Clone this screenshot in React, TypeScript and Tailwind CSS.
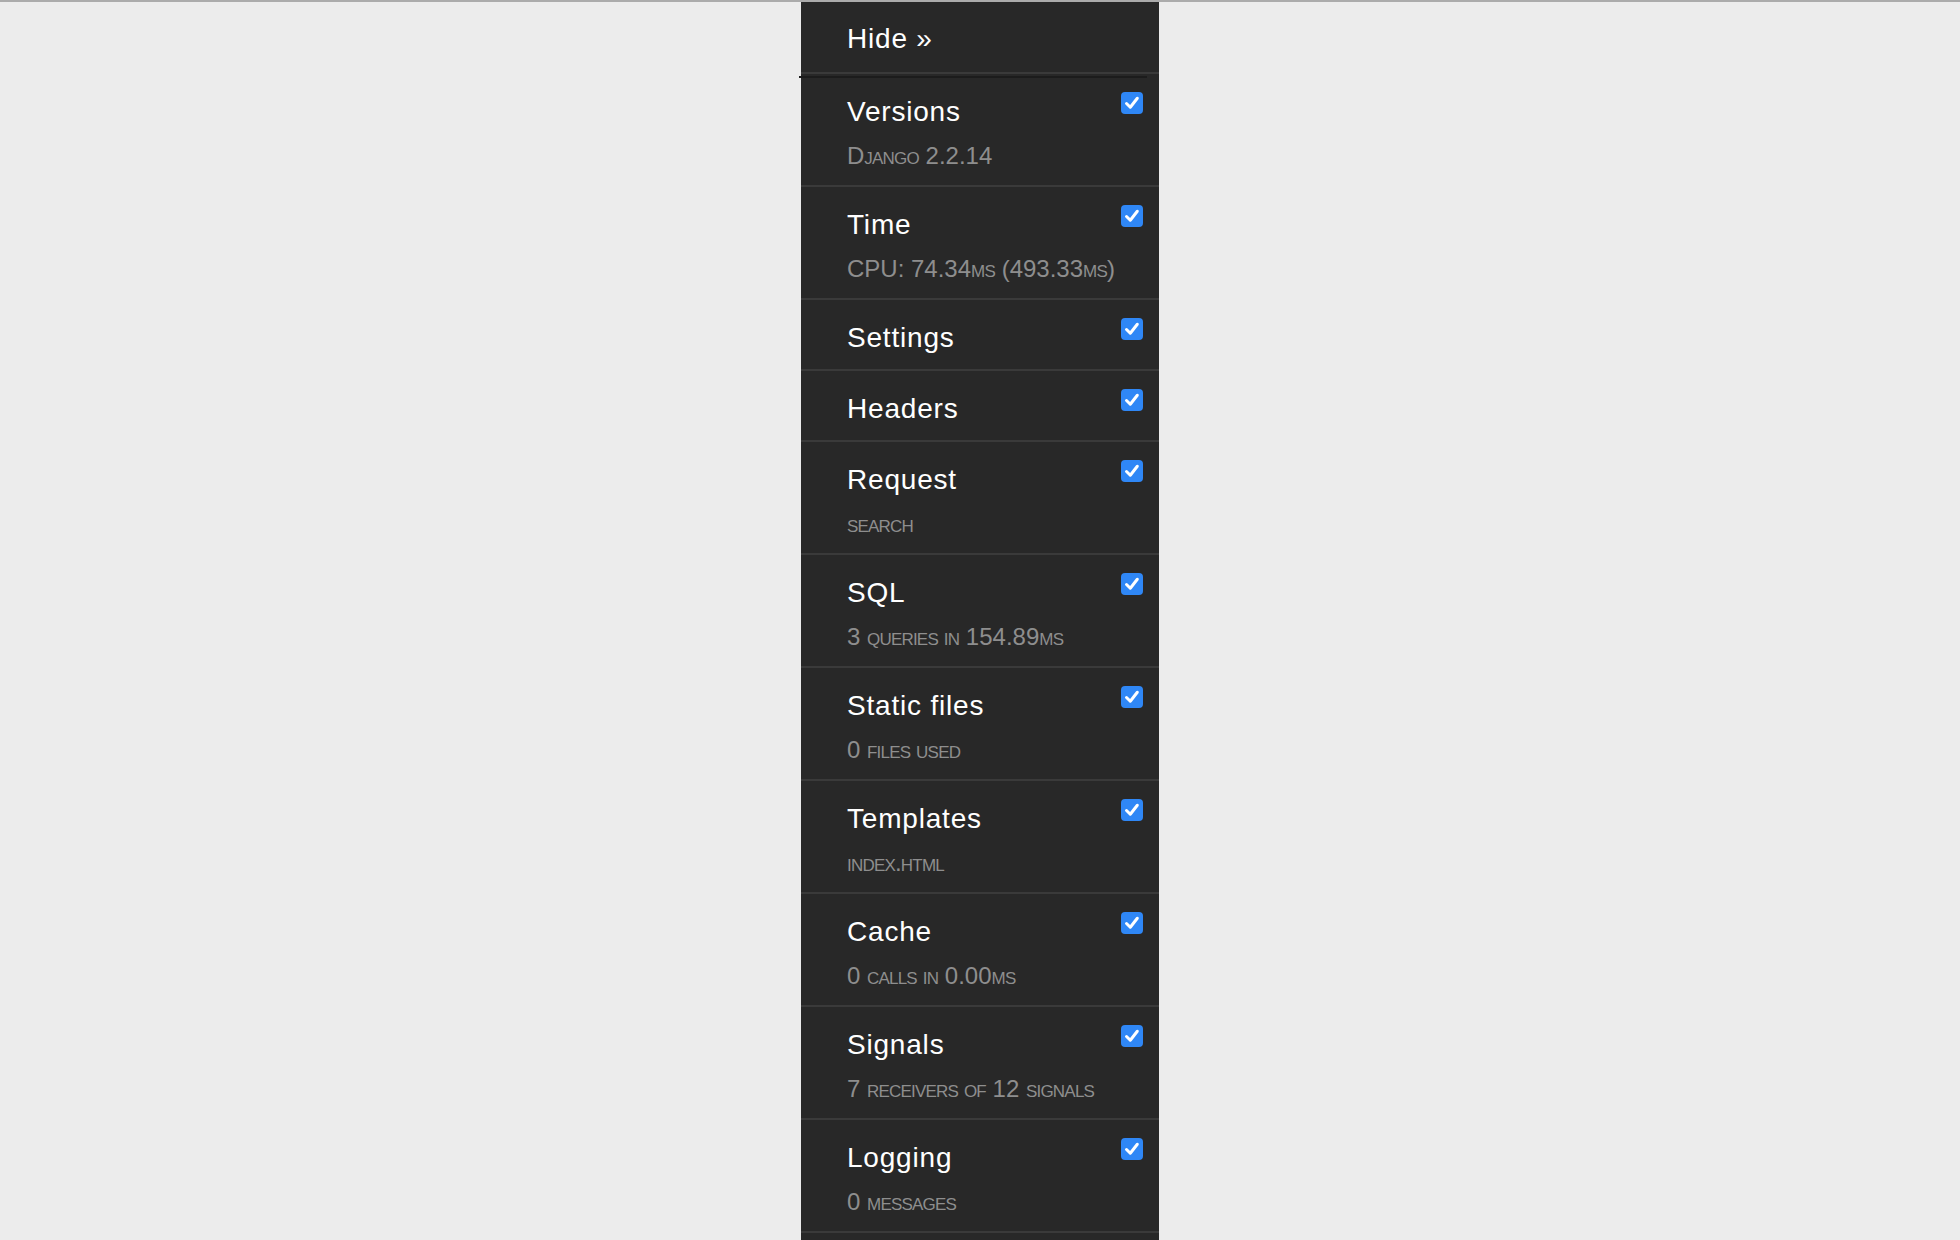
import type { ReactNode } from "react";

type Panel = {
  title: string;
  sub?: ReactNode;
};

const sc = "[font-variant:small-caps] tracking-[-0.8px]";

const PANELS: Panel[] = [
  {
    title: "Versions",
    sub: (
      <>
        D<span className={sc}>jango</span> 2.2.14
      </>
    ),
  },
  {
    title: "Time",
    sub: (
      <>
        CPU: 74.34<span className={sc}>ms</span> (493.33<span className={sc}>ms</span>)
      </>
    ),
  },
  { title: "Settings" },
  { title: "Headers" },
  { title: "Request", sub: <span className={sc}>search</span> },
  {
    title: "SQL",
    sub: (
      <>
        3 <span className={sc}>queries in</span> 154.89<span className={sc}>ms</span>
      </>
    ),
  },
  {
    title: "Static files",
    sub: (
      <>
        0 <span className={sc}>files used</span>
      </>
    ),
  },
  { title: "Templates", sub: <span className={sc}>index.html</span> },
  {
    title: "Cache",
    sub: (
      <>
        0 <span className={sc}>calls in</span> 0.00<span className={sc}>ms</span>
      </>
    ),
  },
  {
    title: "Signals",
    sub: (
      <>
        7 <span className={sc}>receivers of</span> 12 <span className={sc}>signals</span>
      </>
    ),
  },
  {
    title: "Logging",
    sub: (
      <>
        0 <span className={sc}>messages</span>
      </>
    ),
  },
];

function Checkbox() {
  return (
    <span className="flex h-[22px] w-[22px] items-center justify-center rounded-[4px] bg-[#2f87f6]">
      <svg width="22" height="22" viewBox="0 0 22 22">
        <path d="M5.5 11.5 L9.3 15.2 L16.3 6.3" fill="none" stroke="#fff" strokeWidth="3" strokeLinecap="round" strokeLinejoin="round" />
      </svg>
    </span>
  );
}

function PanelRow({ panel, first }: { panel: Panel; first?: boolean }) {
  return (
    <li className="relative flex justify-between border-t-2 border-[#3a3a3a] pl-[46px] pr-4 pt-[21px] pb-[14px]">
      {first && <span className="absolute -left-[2px] top-[2px] h-[2px] w-[348px] bg-[#1c1c1c]" />}
      <div>
        <div className="text-[28px] leading-[34px] tracking-[0.8px] text-white">{panel.title}</div>
        {panel.sub && <div className="mt-3 text-[24px] leading-[30px] text-[#8e8e8e]">{panel.sub}</div>}
      </div>
      <div className="-mt-[3px]">
        <Checkbox />
      </div>
    </li>
  );
}

export default function App() {
  return (
    <div className="h-screen overflow-hidden bg-[#ececec] font-['Liberation_Sans',Arial,sans-serif]">
      <div className="h-[2px] bg-[#ababab]" />
      <div className="flex justify-center">
        <div className="min-h-[1238px] w-[358px] bg-[#282828]">
          <div className="pl-[46px] pt-[20px] pb-[16px] text-[28px] leading-[34px] tracking-[0.8px] text-white">Hide »</div>
          <ul>
            {PANELS.map((p, i) => (
              <PanelRow key={p.title} panel={p} first={i === 0} />
            ))}
            <li className="h-[60px] border-t-2 border-[#3a3a3a]" />
          </ul>
        </div>
      </div>
    </div>
  );
}
